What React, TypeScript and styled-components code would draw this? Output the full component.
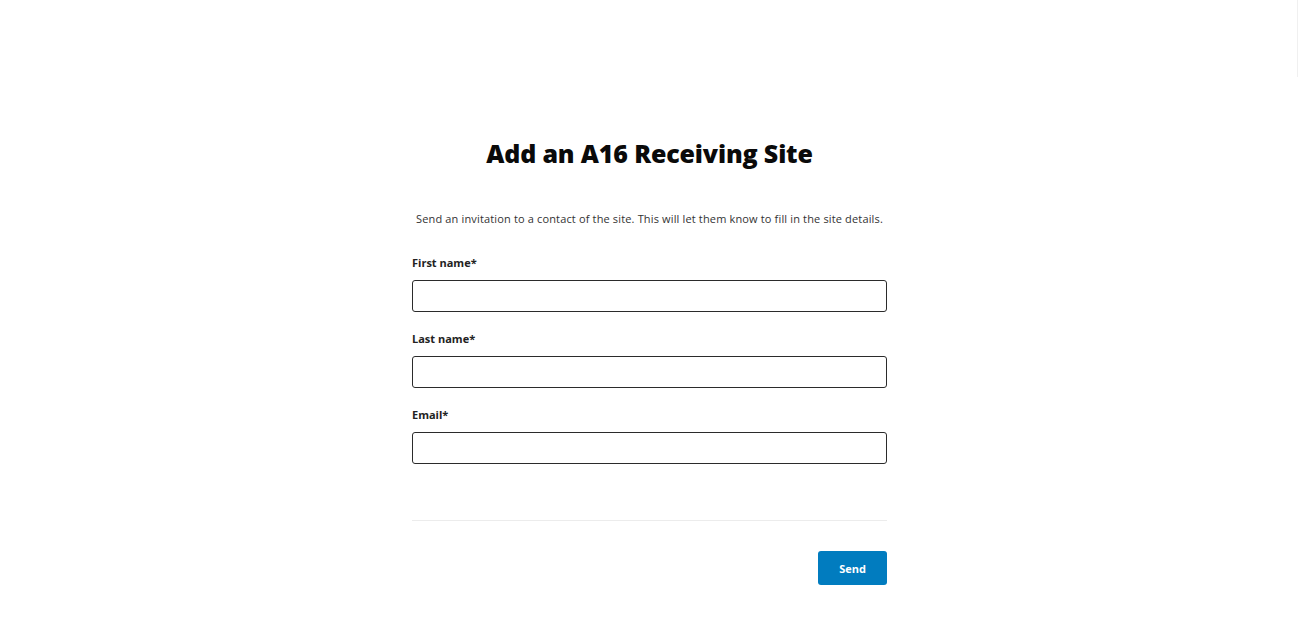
import React from "react";
import styled, { createGlobalStyle } from "styled-components";

const Global = createGlobalStyle`
  html, body { margin: 0; padding: 0; background: #fff; }
  body { font-family: "Open Sans", "Noto Sans", "Liberation Sans", sans-serif; color: #1a1a1a; }
`;

const Page = styled.div`
  min-height: 627px;
  display: flex;
  justify-content: center;
  position: relative;
`;

const EdgeLine = styled.div`
  position: fixed;
  top: 0;
  right: 1px;
  width: 1px;
  height: 77px;
  background: #f0f0f0;
`;

const Column = styled.div`
  width: 475px;
  padding-top: 137px;
  display: flex;
  flex-direction: column;
`;

const Title = styled.h1`
  margin: 0;
  text-align: center;
  font-size: 25px;
  line-height: 32px;
  font-weight: 800;
  letter-spacing: -0.15px;
  color: #0a0a0a;
`;

const Intro = styled.p`
  margin: 43px 0 0;
  text-align: center;
  font-size: 11px;
  line-height: 14px;
  letter-spacing: 0.15px;
  color: #333;
`;

const Field = styled.div`
  display: flex;
  flex-direction: column;
  margin-top: ${(p: { first?: boolean }) => (p.first ? "30px" : "20px")};
`;

const Label = styled.label`
  font-size: 11px;
  line-height: 14px;
  font-weight: 700;
  color: #222;
  margin-bottom: 10px;
`;

const Input = styled.input`
  box-sizing: border-box;
  width: 100%;
  height: 32px;
  border: 1.5px solid #2b2b2b;
  border-radius: 3px;
  background: #fff;
  padding: 0 10px;
  font-family: inherit;
  font-size: 13px;
  outline: none;
`;

const Divider = styled.hr`
  margin: 56px 0 0;
  border: none;
  border-top: 1px solid #ececec;
`;

const Actions = styled.div`
  display: flex;
  justify-content: flex-end;
  margin-top: 30px;
`;

const Button = styled.button`
  width: 69px;
  height: 34px;
  border: none;
  border-radius: 3px;
  background: #017cbf;
  color: #fff;
  font-family: inherit;
  font-weight: 700;
  font-size: 11px;
  cursor: pointer;
`;

export default function App() {
  const fields = [
    { id: "first", label: "First name*" },
    { id: "last", label: "Last name*" },
    { id: "email", label: "Email*" },
  ];
  return (
    <>
      <Global />
      <Page>
        <EdgeLine />
        <Column>
          <Title>Add an A16 Receiving Site</Title>
          <Intro>
            Send an invitation to a contact of the site. This will let them know to fill in the site details.
          </Intro>
          {fields.map((f, i) => (
            <Field key={f.id} first={i === 0}>
              <Label htmlFor={f.id}>{f.label}</Label>
              <Input id={f.id} type={f.id === "email" ? "email" : "text"} />
            </Field>
          ))}
          <Divider />
          <Actions>
            <Button>Send</Button>
          </Actions>
        </Column>
      </Page>
    </>
  );
}
